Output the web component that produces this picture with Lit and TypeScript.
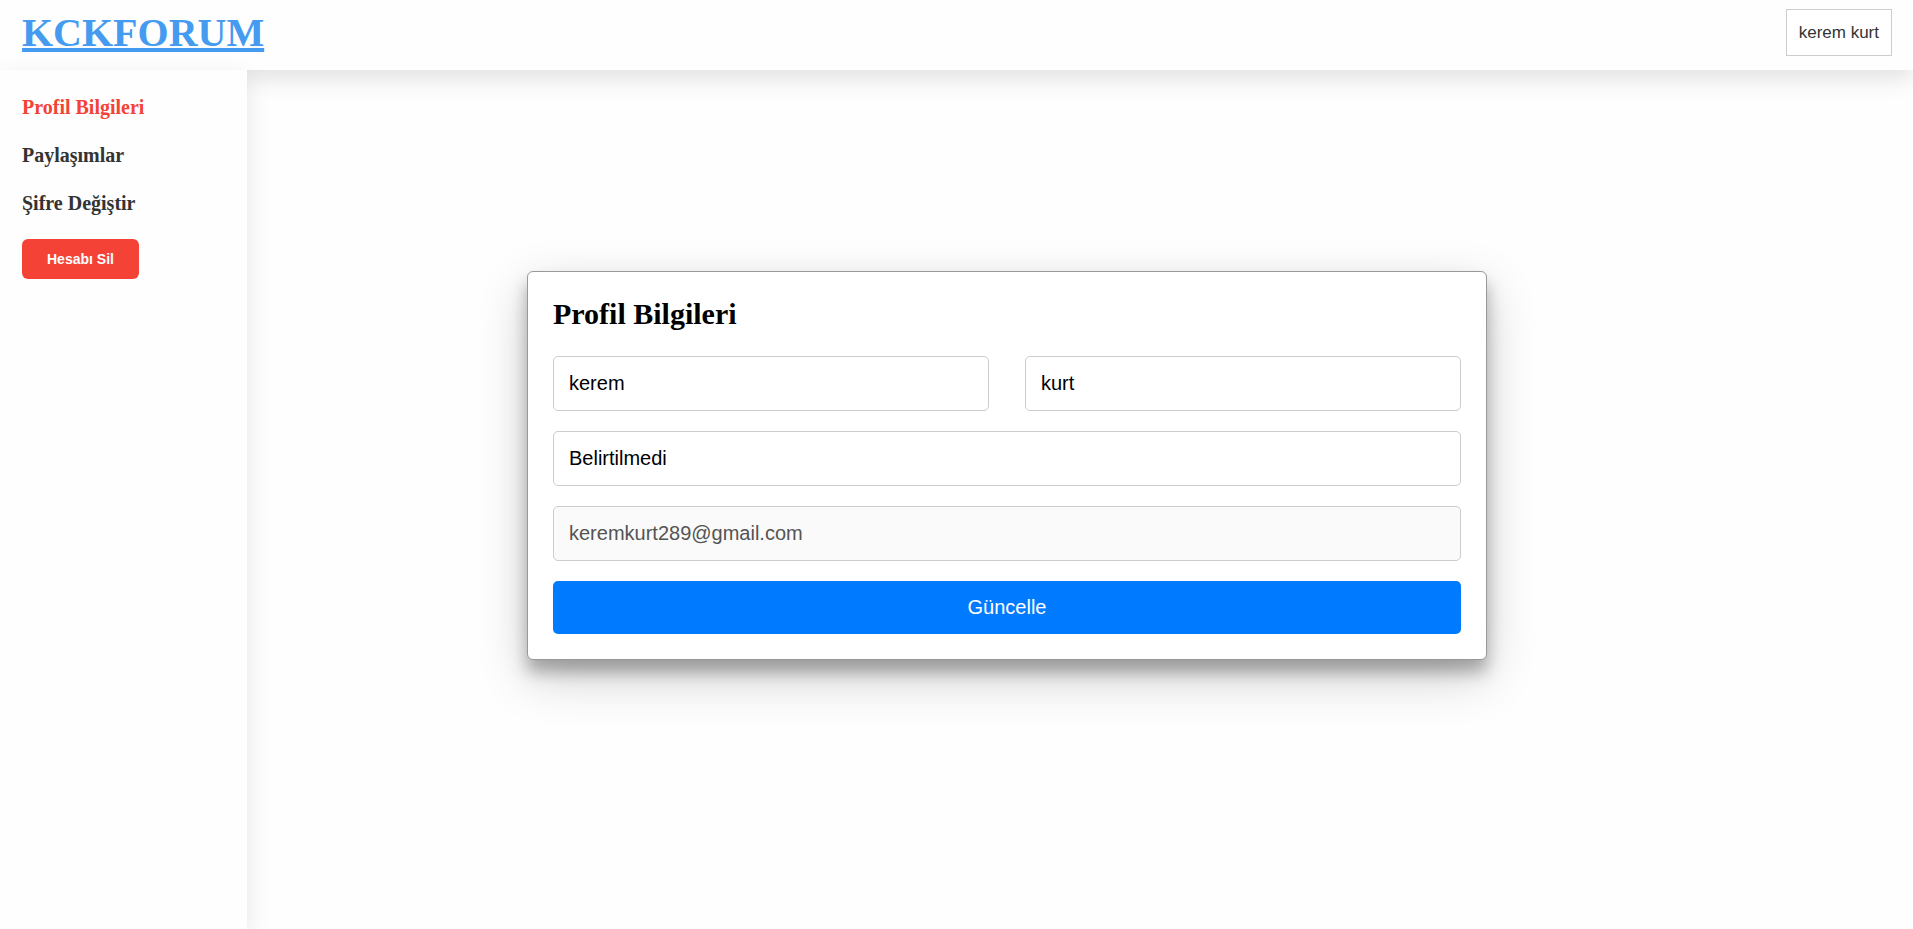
import { LitElement, html, css } from "lit";
import { customElement, state } from "lit/decorators.js";

@customElement("app-root")
export class AppRoot extends LitElement {
  static styles = css`
    :host {
      display: flex;
      flex-direction: column;
      min-height: 100vh;
      background: #fefefe;
      font-family: "Liberation Serif", "Times New Roman", serif;
    }
    *,
    *::before,
    *::after {
      box-sizing: border-box;
    }
    .header {
      display: flex;
      justify-content: space-between;
      align-items: flex-start;
      height: 70px;
      padding: 9px 21px 0 22px;
      background: #fefefe;
      box-shadow: 0 8px 24px rgba(0, 0, 0, 0.12);
    }
    .logo {
      font-size: 40px;
      line-height: 48px;
      font-weight: bold;
      color: #459bf0;
      text-decoration: underline;
      text-decoration-thickness: 4px;
    }
    .user {
      height: 47px;
      padding: 0 12px;
      border: 1px solid #ccc;
      background: #fff;
      color: #333;
      font: 17px "Liberation Sans", Arial, sans-serif;
    }
    .body {
      flex: 1;
      display: flex;
    }
    .sidebar {
      display: flex;
      flex-direction: column;
      align-items: flex-start;
      gap: 24px;
      flex: 0 0 247px;
      padding: 25px 22px;
      background: #fefefe;
      box-shadow: 0 8px 24px rgba(0, 0, 0, 0.1);
      z-index: 1;
    }
    .link {
      font-size: 20px;
      line-height: 24px;
      font-weight: bold;
      color: #333;
      text-decoration: none;
    }
    .link.active {
      color: #f44336;
    }
    .delete {
      height: 40px;
      padding: 0 25px;
      border: 0;
      border-radius: 6px;
      background: #f44336;
      color: #fff;
      font: bold 14px "Liberation Sans", Arial, sans-serif;
    }
    .main {
      flex: 1;
      display: flex;
      align-items: center;
      justify-content: center;
      padding: 0 146px 68px 0;
    }
    .card {
      flex: 0 1 960px;
      display: flex;
      flex-direction: column;
      gap: 20px;
      padding: 25px;
      border: 1px solid #999;
      border-radius: 6px;
      background: #fff;
      box-shadow: 0 12px 16px rgba(0, 0, 0, 0.28), 0 17px 50px rgba(0, 0, 0, 0.2);
    }
    .title {
      margin: 0 0 5px;
      font-size: 30px;
      line-height: 34px;
    }
    .row {
      display: flex;
      gap: 36px;
    }
    .field {
      flex: 1;
      width: 100%;
      min-width: 0;
      padding: 15px;
      border: 1px solid #ccc;
      border-radius: 5px;
      background: #fff;
      color: #000;
      font: 20px/23px "Liberation Sans", Arial, sans-serif;
    }
    .field:disabled {
      background: #fafafa;
      color: #545454;
    }
    .submit {
      padding: 15px;
      border: 0;
      border-radius: 5px;
      background: #007bff;
      color: #fff;
      font: 20px/23px "Liberation Sans", Arial, sans-serif;
    }
  `;

  @state() private active = "Profil Bilgileri";

  private links = ["Profil Bilgileri", "Paylaşımlar", "Şifre Değiştir"];

  private select(event: Event, name: string) {
    event.preventDefault();
    this.active = name;
  }

  render() {
    return html`
      <header class="header">
        <a class="logo" href="#">KCKFORUM</a>
        <button class="user" type="button">kerem kurt</button>
      </header>
      <div class="body">
        <nav class="sidebar">
          ${this.links.map(
            (name) => html`<a
              class="link ${name === this.active ? "active" : ""}"
              href="#"
              @click=${(e: Event) => this.select(e, name)}
              >${name}</a
            >`
          )}
          <button class="delete" type="button">Hesabı Sil</button>
        </nav>
        <main class="main">
          <form class="card" @submit=${(e: Event) => e.preventDefault()}>
            <h2 class="title">Profil Bilgileri</h2>
            <div class="row">
              <input class="field" type="text" aria-label="Ad" value="kerem" />
              <input class="field" type="text" aria-label="Soyad" value="kurt" />
            </div>
            <input class="field" type="text" aria-label="Telefon" value="Belirtilmedi" />
            <input class="field" type="email" aria-label="E-posta" value="keremkurt289@gmail.com" disabled />
            <button class="submit" type="submit">Güncelle</button>
          </form>
        </main>
      </div>
    `;
  }
}
